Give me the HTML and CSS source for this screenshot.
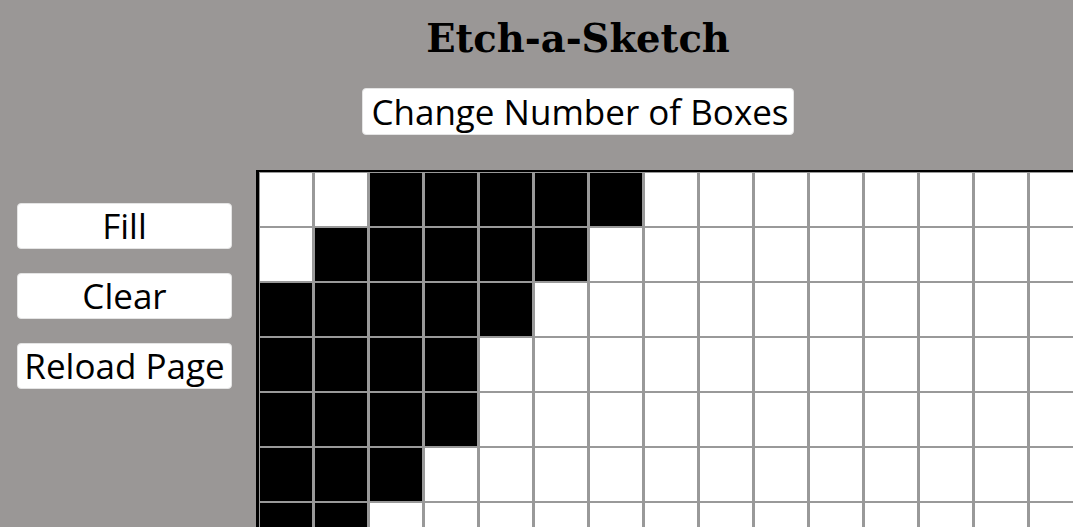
FILE: index.html
```html
<html>
<head>
    <link rel="stylesheet" href="styles.css">
</head>

<body>

<div class="header">
    <h1>Etch-a-Sketch</h1>
    <button class="change">Change Number of Boxes</button>
</div>

<div class="main">
    <div class="controls">
        <button id="fill">Fill</button>
        <button id="clear">Clear</button>
        <button id="reload">Reload Page</button>
    </div>
    <div id="board" class="board"></div>
</div>

<script>
    // rows of the sketch that are drawn in, first..last column
    var drawn = [[2, 6], [1, 5], [0, 4], [0, 3], [0, 3], [0, 2], [0, 1]];
    var size = 16;
    var board = document.getElementById("board");

    for (let r = 0; r < size; r++)
    {
        for (let c = 0; c < size; c++)
        {
            let cell = document.createElement("div");
            cell.className = "cell";
            if (drawn[r] && c >= drawn[r][0] && c <= drawn[r][1])
                cell.className += " on";
            board.appendChild(cell);
        }
    }
</script>

</body>
</html>
```

FILE: styles.css
```css
html { overflow: hidden; }
body { margin: 0; background: #9a9796; font-family: "Open Sans", sans-serif; }

.header { display: flex; flex-direction: column; align-items: center; padding: 17px 0 0 83px; }
h1 { font-family: "DejaVu Serif", serif; font-size: 38.5px; line-height: 44px; margin: 0; color: #000; }

button { font-family: "Open Sans", sans-serif; font-size: 35px; line-height: 40px; color: #000; background: #fff; border: 1px solid #e4e4e4; border-radius: 4px; padding: 2px 8px; }
.change { margin-top: 27px; padding: 3px 4px 2px 8px; }

.main { display: flex; align-items: flex-start; margin-top: 35px; padding-left: 17px; }
.controls { display: flex; flex-direction: column; gap: 24px; width: 215px; padding-top: 33px; flex-shrink: 0; }
.controls button { width: 215px; padding: 2px 0; }

.board { display: grid; grid-template-columns: repeat(16, 52px); grid-auto-rows: 53px; column-gap: 3px; row-gap: 2px; padding: 1px; margin-left: 24px; background: #999; border-left: 3px solid #000; border-top: 2px solid #000; flex-shrink: 0; }
.cell { background: #fff; }
.cell.on { background: #000; }
```
